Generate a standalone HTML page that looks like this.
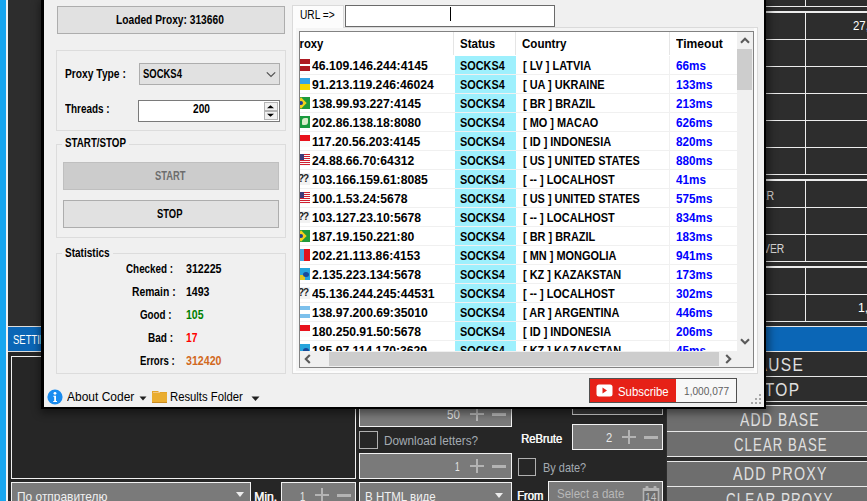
<!DOCTYPE html>
<html><head><meta charset="utf-8">
<style>
*{margin:0;padding:0;box-sizing:border-box}
html,body{width:867px;height:501px;overflow:hidden;background:#2d2d2d;font-family:"Liberation Sans",sans-serif;position:relative}
.a{position:absolute}
.t{white-space:nowrap;transform-origin:0 0}
</style></head><body>
<div class="a" style="left:0px;top:0px;width:6px;height:501px;background:#17a6f0;"></div>
<div class="a" style="left:6px;top:0px;width:2px;height:501px;background:#f2f2f2;"></div>
<div class="a" style="left:8px;top:0px;width:859px;height:501px;background:#2d2d2d;"></div>
<div class="a" style="left:8px;top:352px;width:658px;height:149px;background:#262626;"></div>
<div class="a" style="left:8px;top:326px;width:40px;height:1px;background:#dcdcdc;"></div>
<div class="a" style="left:8px;top:327px;width:40px;height:24px;background:#0b66b6;"></div>
<div class="a" style="left:8px;top:351px;width:40px;height:1px;background:#dcdcdc;"></div>
<div class="a t" style="left:12.50px;top:334px;font-size:12px;line-height:12px;color:#fff;transform:scaleX(0.7900);">SETTINGS</div>
<div class="a" style="left:11px;top:356px;width:345px;height:123px;background:#262626;border:1px solid #f0f0f0;"></div>
<div class="a" style="left:11px;top:482px;width:240px;height:38px;background:#7a7a7a;border:1px solid #f2f2f2;"></div>
<div class="a t" style="left:17.40px;top:489.5px;font-size:13px;line-height:13px;color:#f0f0f0;transform:scaleX(0.9169);">По отправителю</div>
<div class="a" style="left:236px;top:492px;width:0;height:0;border-left:4px solid transparent;border-right:4px solid transparent;border-top:5px solid #ececec"></div>
<div class="a t" style="left:253.70px;top:490px;font-size:13px;line-height:13px;color:#f8f8f8;transform:scaleX(0.9350);text-shadow:0.5px 0 0 #f8f8f8;">Min.</div>
<div class="a" style="left:281px;top:482px;width:75px;height:38px;background:#7a7a7a;border:1px solid #f2f2f2;"></div>
<div class="a t" style="left:299.60px;top:490px;font-size:13px;line-height:13px;color:#e8e8e8;transform:scaleX(0.7222);">1</div>
<div class="a" style="left:315px;top:494px;width:14px;height:2px;background:#b4b4b4;"></div><div class="a" style="left:321px;top:488px;width:2px;height:14px;background:#b4b4b4;"></div><div class="a" style="left:337px;top:494px;width:14px;height:3px;background:#b4b4b4;"></div>
<div class="a" style="left:359px;top:395px;width:153px;height:32px;background:#7a7a7a;border:1px solid #f2f2f2;"></div>
<div class="a t" style="left:447.30px;top:408px;font-size:13px;line-height:13px;color:#e8e8e8;transform:scaleX(0.8897);">50</div>
<div class="a" style="left:470px;top:413px;width:14px;height:2px;background:#b4b4b4;"></div><div class="a" style="left:476px;top:407px;width:2px;height:14px;background:#b4b4b4;"></div><div class="a" style="left:492px;top:413px;width:14px;height:3px;background:#b4b4b4;"></div>
<div class="a" style="left:359px;top:431px;width:19px;height:18px;background:#262626;border:1px solid #b0b0b0;"></div>
<div class="a t" style="left:383.60px;top:434px;font-size:13px;line-height:13px;color:#a4abb2;transform:scaleX(0.9039);">Download letters?</div>
<div class="a" style="left:359px;top:453px;width:153px;height:26px;background:#7a7a7a;border:1px solid #f2f2f2;"></div>
<div class="a t" style="left:454.60px;top:460px;font-size:13px;line-height:13px;color:#e8e8e8;transform:scaleX(0.6389);">1</div>
<div class="a" style="left:470px;top:465px;width:14px;height:2px;background:#b4b4b4;"></div><div class="a" style="left:476px;top:459px;width:2px;height:14px;background:#b4b4b4;"></div><div class="a" style="left:492px;top:465px;width:14px;height:3px;background:#b4b4b4;"></div>
<div class="a" style="left:359px;top:482px;width:153px;height:38px;background:#7a7a7a;border:1px solid #f2f2f2;"></div>
<div class="a t" style="left:365.10px;top:489.7px;font-size:13px;line-height:13px;color:#f0f0f0;transform:scaleX(0.8860);">В HTML виде</div>
<div class="a" style="left:495px;top:493px;width:0;height:0;border-left:4px solid transparent;border-right:4px solid transparent;border-top:5px solid #ececec"></div>
<div class="a" style="left:572px;top:390px;width:91px;height:25px;background:#383838;border:1px solid #c8c8c8;"></div>
<div class="a t" style="left:520.70px;top:432px;font-size:13px;line-height:13px;color:#f8f8f8;transform:scaleX(0.8595);text-shadow:0.5px 0 0 #f8f8f8;">ReBrute</div>
<div class="a" style="left:572px;top:424px;width:91px;height:26px;background:#7a7a7a;border:1px solid #f2f2f2;"></div>
<div class="a t" style="left:605.60px;top:431.4px;font-size:13px;line-height:13px;color:#e8e8e8;transform:scaleX(0.8611);">2</div>
<div class="a" style="left:622px;top:436px;width:14px;height:2px;background:#b4b4b4;"></div><div class="a" style="left:628px;top:430px;width:2px;height:14px;background:#b4b4b4;"></div><div class="a" style="left:644px;top:436px;width:14px;height:3px;background:#b4b4b4;"></div>
<div class="a" style="left:518px;top:458px;width:18px;height:18px;background:#262626;border:1px solid #b0b0b0;"></div>
<div class="a t" style="left:542.80px;top:461px;font-size:13px;line-height:13px;color:#a4abb2;transform:scaleX(0.8421);">By date?</div>
<div class="a t" style="left:517.00px;top:489.3px;font-size:13px;line-height:13px;color:#f8f8f8;transform:scaleX(0.8647);text-shadow:0.5px 0 0 #f8f8f8;">From</div>
<div class="a" style="left:548px;top:481px;width:115px;height:39px;background:#7a7a7a;border:1px solid #f2f2f2;"></div>
<div class="a t" style="left:557.00px;top:487.3px;font-size:13px;line-height:13px;color:#b8b8b8;transform:scaleX(0.8880);">Select a date</div>
<svg class="a" style="left:642px;top:485px" width="18" height="16"><rect x="1.5" y="4" width="15" height="14" fill="#6c6c6c" stroke="#b4b4b4" stroke-width="1.6"/><rect x="1" y="3" width="16" height="3" fill="#b4b4b4"/><rect x="3.5" y="1" width="3" height="3.5" rx="1" fill="#b4b4b4"/><rect x="11.5" y="1" width="3" height="3.5" rx="1" fill="#b4b4b4"/><text x="3.3" y="15.6" font-family="Liberation Sans" font-size="10" fill="#c4c4c4">14</text></svg>
<div class="a" style="left:667px;top:326px;width:200px;height:1px;background:#e8e8e8;"></div>
<div class="a" style="left:667px;top:327px;width:200px;height:24px;background:#0b66b6;"></div>
<div class="a" style="left:667px;top:351px;width:200px;height:1px;background:#e8e8e8;"></div>
<div class="a t" style="left:746.45px;top:356px;font-size:18px;line-height:18px;color:#e0e0e0;transform:scaleX(0.8600);letter-spacing:1.6px;">PAUSE</div>
<div class="a" style="left:667px;top:376px;width:200px;height:1px;background:#e8e8e8;"></div>
<div class="a t" style="left:752.99px;top:381px;font-size:18px;line-height:18px;color:#e0e0e0;transform:scaleX(0.8600);letter-spacing:1.6px;">STOP</div>
<div class="a" style="left:667px;top:401px;width:200px;height:1px;background:#e8e8e8;"></div>
<div class="a" style="left:667px;top:405px;width:200px;height:1px;background:#e8e8e8;"></div>
<div class="a" style="left:667px;top:406px;width:200px;height:25px;background:#6e6e6e;"></div>
<div class="a t" style="left:739.80px;top:411px;font-size:18px;line-height:18px;color:#e0e0e0;transform:scaleX(0.7744);letter-spacing:1.5px;">ADD BASE</div>
<div class="a" style="left:667px;top:431px;width:200px;height:1px;background:#e8e8e8;"></div>
<div class="a" style="left:667px;top:432px;width:200px;height:24px;background:#6e6e6e;"></div>
<div class="a t" style="left:733.50px;top:436px;font-size:18px;line-height:18px;color:#e0e0e0;transform:scaleX(0.7312);letter-spacing:1.5px;">CLEAR BASE</div>
<div class="a" style="left:667px;top:456px;width:200px;height:1px;background:#e8e8e8;"></div>
<div class="a" style="left:667px;top:461px;width:200px;height:1px;background:#e8e8e8;"></div>
<div class="a" style="left:667px;top:462px;width:200px;height:24px;background:#6e6e6e;"></div>
<div class="a t" style="left:733.00px;top:465px;font-size:18px;line-height:18px;color:#e0e0e0;transform:scaleX(0.7915);letter-spacing:1.5px;">ADD PROXY</div>
<div class="a" style="left:667px;top:486px;width:200px;height:1px;background:#e8e8e8;"></div>
<div class="a" style="left:667px;top:487px;width:200px;height:14px;background:#6e6e6e;"></div>
<div class="a t" style="left:725.90px;top:490.5px;font-size:18px;line-height:18px;color:#e0e0e0;transform:scaleX(0.7434);letter-spacing:1.5px;">CLEAR PROXY</div>
<div class="a" style="left:764px;top:6px;width:103px;height:1px;background:#ececec;"></div>
<div class="a" style="left:764px;top:11px;width:103px;height:2px;background:#ececec;"></div>
<div class="a" style="left:764px;top:39px;width:103px;height:1px;background:#ececec;"></div>
<div class="a" style="left:764px;top:66px;width:103px;height:1px;background:#ececec;"></div>
<div class="a" style="left:764px;top:93px;width:103px;height:1px;background:#ececec;"></div>
<div class="a" style="left:764px;top:120px;width:103px;height:1px;background:#ececec;"></div>
<div class="a" style="left:764px;top:147px;width:103px;height:1px;background:#ececec;"></div>
<div class="a" style="left:764px;top:174px;width:103px;height:1px;background:#ececec;"></div>
<div class="a" style="left:764px;top:179px;width:103px;height:2px;background:#ececec;"></div>
<div class="a" style="left:764px;top:207px;width:103px;height:1px;background:#ececec;"></div>
<div class="a" style="left:764px;top:234px;width:103px;height:1px;background:#ececec;"></div>
<div class="a" style="left:764px;top:261px;width:103px;height:1px;background:#ececec;"></div>
<div class="a" style="left:764px;top:266px;width:103px;height:2px;background:#ececec;"></div>
<div class="a" style="left:764px;top:294px;width:103px;height:1px;background:#ececec;"></div>
<div class="a" style="left:764px;top:321px;width:103px;height:1px;background:#ececec;"></div>
<div class="a" style="left:805px;top:0px;width:1px;height:6px;background:#ececec;"></div>
<div class="a" style="left:805px;top:13px;width:1px;height:161px;background:#ececec;"></div>
<div class="a" style="left:805px;top:181px;width:1px;height:80px;background:#ececec;"></div>
<div class="a" style="left:805px;top:268px;width:1px;height:53px;background:#ececec;"></div>
<div class="a t" style="left:853.40px;top:19px;font-size:13px;line-height:13px;color:#fff;transform:scaleX(0.8800);">27,5</div>
<div class="a t" style="left:730.79px;top:190px;font-size:12px;line-height:12px;color:#d8d8d8;transform:scaleX(0.8800);">SERVER</div>
<div class="a t" style="left:741.77px;top:243px;font-size:12px;line-height:12px;color:#d8d8d8;transform:scaleX(0.8600);">SERVER</div>
<div class="a t" style="left:858.30px;top:301px;font-size:13px;line-height:13px;color:#fff;transform:scaleX(0.9500);">1,</div>
<div class="a" style="left:41px;top:0px;width:725px;height:409px;background:#000;box-shadow:1px 2px 8px 2px rgba(0,0,0,0.45);"></div>
<div class="a" style="left:44px;top:0px;width:720px;height:407px;background:#f0f0f0;"></div>
<div class="a" style="left:57px;top:6px;width:228px;height:28px;background:#e1e1e1;border:1px solid #adadad;"></div>
<div class="a t" style="left:116.20px;top:14px;font-size:12px;line-height:12px;font-weight:bold;color:#000;transform:scaleX(0.8508);">Loaded Proxy: 313660</div>
<div class="a" style="left:56px;top:50px;width:230px;height:81px;border:1px solid #dcdcdc;"></div>
<div class="a t" style="left:65.20px;top:68px;font-size:12px;line-height:12px;font-weight:bold;color:#000;transform:scaleX(0.8551);">Proxy Type :</div>
<div class="a" style="left:139px;top:63px;width:141px;height:22px;background:#e1e1e1;border:1px solid #adadad;"></div>
<div class="a t" style="left:143.00px;top:68px;font-size:12px;line-height:12px;font-weight:bold;color:#000;transform:scaleX(0.7895);">SOCKS4</div>
<svg class="a" style="left:266px;top:71px" width="10" height="7"><path d="M0.8 1.3 L5 5.5 L9.2 1.3" fill="none" stroke="#505050" stroke-width="1.2"/></svg>
<div class="a t" style="left:65.20px;top:103px;font-size:12px;line-height:12px;font-weight:bold;color:#000;transform:scaleX(0.8259);">Threads :</div>
<div class="a" style="left:138px;top:100px;width:142px;height:22px;background:#fff;border:1px solid #7a7a7a;"></div>
<div class="a t" style="left:192.50px;top:103px;font-size:12px;line-height:12px;font-weight:bold;color:#000;transform:scaleX(0.8450);">200</div>
<div class="a" style="left:264px;top:102px;width:14px;height:9px;background:#f0f0f0;border:1px solid #b4b4b4;"></div>
<div class="a" style="left:264px;top:111px;width:14px;height:9px;background:#f0f0f0;border:1px solid #b4b4b4;"></div>
<svg class="a" style="left:267px;top:104px" width="8" height="15"><path d="M3.5 1.3 L7 4.3 L0 4.3Z M0 9.8 L7 9.8 L3.5 12.8Z" fill="#000"/></svg>
<div class="a" style="left:56px;top:144px;width:230px;height:94px;border:1px solid #dcdcdc;"></div>
<div class="a" style="left:62px;top:138px;width:67px;height:12px;background:#f0f0f0;"></div>
<div class="a t" style="left:64.80px;top:137px;font-size:12px;line-height:12px;font-weight:bold;color:#000;transform:scaleX(0.8144);">START/STOP</div>
<div class="a" style="left:63px;top:162px;width:216px;height:28px;background:#cccccc;border:1px solid #bfbfbf;"></div>
<div class="a t" style="left:155.00px;top:170px;font-size:12px;line-height:12px;font-weight:bold;color:#6d6d6d;transform:scaleX(0.7826);">START</div>
<div class="a" style="left:63px;top:200px;width:216px;height:28px;background:#e1e1e1;border:1px solid #adadad;"></div>
<div class="a t" style="left:157.10px;top:208px;font-size:12px;line-height:12px;font-weight:bold;color:#000;transform:scaleX(0.7846);">STOP</div>
<div class="a" style="left:56px;top:253px;width:230px;height:121px;border:1px solid #dcdcdc;"></div>
<div class="a" style="left:62px;top:247px;width:51px;height:12px;background:#f0f0f0;"></div>
<div class="a t" style="left:65.20px;top:247px;font-size:12px;line-height:12px;font-weight:bold;color:#000;transform:scaleX(0.8352);">Statistics</div>
<div class="a t" style="left:126.00px;top:263px;font-size:12px;line-height:12px;font-weight:bold;color:#000;transform:scaleX(0.8206);">Checked :</div>
<div class="a t" style="left:186.00px;top:263px;font-size:12px;line-height:12px;font-weight:bold;color:#000;transform:scaleX(0.8875);">312225</div>
<div class="a t" style="left:132.20px;top:286px;font-size:12px;line-height:12px;font-weight:bold;color:#000;transform:scaleX(0.8600);">Remain :</div>
<div class="a t" style="left:186.00px;top:286px;font-size:12px;line-height:12px;font-weight:bold;color:#000;transform:scaleX(0.8801);">1493</div>
<div class="a t" style="left:139.50px;top:309px;font-size:12px;line-height:12px;font-weight:bold;color:#000;transform:scaleX(0.8140);">Good :</div>
<div class="a t" style="left:186.00px;top:309px;font-size:12px;line-height:12px;font-weight:bold;color:#008000;transform:scaleX(0.8750);">105</div>
<div class="a t" style="left:148.20px;top:332px;font-size:12px;line-height:12px;font-weight:bold;color:#000;transform:scaleX(0.8333);">Bad :</div>
<div class="a t" style="left:186.00px;top:332px;font-size:12px;line-height:12px;font-weight:bold;color:#ff0000;transform:scaleX(0.8571);">17</div>
<div class="a t" style="left:139.50px;top:355px;font-size:12px;line-height:12px;font-weight:bold;color:#000;transform:scaleX(0.7995);">Errors :</div>
<div class="a t" style="left:186.00px;top:355px;font-size:12px;line-height:12px;font-weight:bold;color:#d2691e;transform:scaleX(0.8875);">312420</div>
<svg class="a" style="left:47px;top:389px" width="16" height="16"><circle cx="8" cy="8" r="7.6" fill="#1a8cf0"/><circle cx="8" cy="4.3" r="1.4" fill="#fff"/><path d="M6.3 6.8 H9 V12 H10 V13 H6.2 V12 H7.2 V7.8 H6.3Z" fill="#fff"/></svg>
<div class="a t" style="left:66.80px;top:390px;font-size:13px;line-height:13px;color:#000;transform:scaleX(0.9219);">About Coder</div>
<svg class="a" style="left:139px;top:396px" width="8" height="5"><path d="M0.5 0.5 H7.5 L4 4.5Z" fill="#202020"/></svg>
<svg class="a" style="left:152px;top:391px" width="15" height="12"><path d="M0 0 H6 L7 1 H15 V12 H0Z" fill="#e4a42a"/><rect x="0" y="2" width="15" height="10" fill="#eaad30"/><path d="M1 1.5 H8" stroke="#f3c880" stroke-width="1"/><path d="M0 11.5 H15" stroke="#c88a20" stroke-width="1"/></svg>
<div class="a t" style="left:170.40px;top:390px;font-size:13px;line-height:13px;color:#000;transform:scaleX(0.8687);">Results Folder</div>
<svg class="a" style="left:251px;top:396px" width="9" height="6"><path d="M0.5 0.5 H8.5 L4.5 5Z" fill="#202020"/></svg>
<div class="a" style="left:292px;top:27px;width:466px;height:347px;background:#fcfcfc;border:1px solid #dadada;"></div>
<div class="a" style="left:292px;top:5px;width:52px;height:23px;background:#fcfcfc;border:1px solid #dadada;border-bottom:none;"></div>
<div class="a t" style="left:300.30px;top:9px;font-size:12px;line-height:12px;color:#000;transform:scaleX(0.8484);">URL =&gt;</div>
<div class="a" style="left:345px;top:5px;width:210px;height:22px;background:#fff;border:1px solid #6a6a6a;"></div>
<div class="a" style="left:450px;top:7px;width:1px;height:14px;background:#000;"></div>
<div class="a" style="left:296px;top:28px;width:458px;height:343px;background:#f4f4f4;"></div>
<div class="a" style="left:299px;top:31px;width:455px;height:337px;border:1px solid #828282;background:#fff"></div>
<div class="a" style="left:300px;top:32px;width:437px;height:319px;overflow:hidden">
<div class="a t" style="left:-7.54px;top:5px;font-size:13px;line-height:13px;font-weight:bold;color:#000;transform:scaleX(0.8691);">Proxy</div>
<div class="a t" style="left:160.00px;top:5px;font-size:13px;line-height:13px;font-weight:bold;color:#000;transform:scaleX(0.8866);">Status</div>
<div class="a t" style="left:222.00px;top:5px;font-size:13px;line-height:13px;font-weight:bold;color:#000;transform:scaleX(0.8916);">Country</div>
<div class="a t" style="left:375.80px;top:5px;font-size:13px;line-height:13px;font-weight:bold;color:#000;transform:scaleX(0.9304);">Timeout</div>
<div class="a" style="left:153px;top:0px;width:1px;height:23px;background:#e5e5e5;"></div>
<div class="a" style="left:215px;top:0px;width:1px;height:23px;background:#e5e5e5;"></div>
<div class="a" style="left:369px;top:0px;width:1px;height:23px;background:#e5e5e5;"></div>
<div class="a" style="left:0;top:27px;width:10px;height:12px;background:linear-gradient(#ad1a22 0,#ad1a22 5px,#fff 5px,#fff 7px,#ad1a22 7px);overflow:hidden"></div>
<div class="a" style="left:155px;top:24px;width:61px;height:18px;background:#9ef0fd;"></div>
<div class="a" style="left:0px;top:42px;width:437px;height:1px;background:#f0f0f0;"></div>
<div class="a" style="left:369px;top:24px;width:1px;height:18px;background:#f0f0f0;"></div>
<div class="a t" style="left:12.00px;top:27px;font-size:13px;line-height:13px;font-weight:bold;color:#000;transform:scaleX(0.9361);">46.109.146.244:4145</div>
<div class="a t" style="left:160.00px;top:27px;font-size:13px;line-height:13px;font-weight:bold;color:#000;transform:scaleX(0.8355);">SOCKS4</div>
<div class="a t" style="left:223.00px;top:27px;font-size:13px;line-height:13px;font-weight:bold;color:#000;transform:scaleX(0.8409);">[ LV ] LATVIA</div>
<div class="a t" style="left:376.00px;top:27px;font-size:13px;line-height:13px;font-weight:bold;color:#0000ff;transform:scaleX(0.9006);">66ms</div>
<div class="a" style="left:0;top:46px;width:10px;height:12px;background:linear-gradient(#35a4e6 0,#35a4e6 6px,#f4d700 6px);overflow:hidden"></div>
<div class="a" style="left:155px;top:43px;width:61px;height:18px;background:#9ef0fd;"></div>
<div class="a" style="left:0px;top:61px;width:437px;height:1px;background:#f0f0f0;"></div>
<div class="a" style="left:369px;top:43px;width:1px;height:18px;background:#f0f0f0;"></div>
<div class="a t" style="left:12.00px;top:46px;font-size:13px;line-height:13px;font-weight:bold;color:#000;transform:scaleX(0.9361);">91.213.119.246:46024</div>
<div class="a t" style="left:160.00px;top:46px;font-size:13px;line-height:13px;font-weight:bold;color:#000;transform:scaleX(0.8355);">SOCKS4</div>
<div class="a t" style="left:223.00px;top:46px;font-size:13px;line-height:13px;font-weight:bold;color:#000;transform:scaleX(0.8409);">[ UA ] UKRAINE</div>
<div class="a t" style="left:376.00px;top:46px;font-size:13px;line-height:13px;font-weight:bold;color:#0000ff;transform:scaleX(0.9006);">133ms</div>
<div class="a" style="left:0;top:65px;width:10px;height:12px;background:#1e9a3a;overflow:hidden"><div class="a" style="left:-3px;top:2px;width:8px;height:8px;background:#f3d21b;transform:rotate(45deg)"></div><div class="a" style="left:-1px;top:4px;width:4px;height:4px;border-radius:50%;background:#203f90"></div></div>
<div class="a" style="left:155px;top:62px;width:61px;height:18px;background:#9ef0fd;"></div>
<div class="a" style="left:0px;top:80px;width:437px;height:1px;background:#f0f0f0;"></div>
<div class="a" style="left:369px;top:62px;width:1px;height:18px;background:#f0f0f0;"></div>
<div class="a t" style="left:12.00px;top:65px;font-size:13px;line-height:13px;font-weight:bold;color:#000;transform:scaleX(0.9361);">138.99.93.227:4145</div>
<div class="a t" style="left:160.00px;top:65px;font-size:13px;line-height:13px;font-weight:bold;color:#000;transform:scaleX(0.8355);">SOCKS4</div>
<div class="a t" style="left:223.00px;top:65px;font-size:13px;line-height:13px;font-weight:bold;color:#000;transform:scaleX(0.8409);">[ BR ] BRAZIL</div>
<div class="a t" style="left:376.00px;top:65px;font-size:13px;line-height:13px;font-weight:bold;color:#0000ff;transform:scaleX(0.9006);">213ms</div>
<div class="a" style="left:0;top:84px;width:10px;height:12px;background:#1a9a3e;overflow:hidden"><div class="a" style="left:2px;top:2px;width:6px;height:7px;background:#d8ecc8;border-radius:3px 1px 3px 1px"></div></div>
<div class="a" style="left:155px;top:81px;width:61px;height:18px;background:#9ef0fd;"></div>
<div class="a" style="left:0px;top:99px;width:437px;height:1px;background:#f0f0f0;"></div>
<div class="a" style="left:369px;top:81px;width:1px;height:18px;background:#f0f0f0;"></div>
<div class="a t" style="left:12.00px;top:84px;font-size:13px;line-height:13px;font-weight:bold;color:#000;transform:scaleX(0.9361);">202.86.138.18:8080</div>
<div class="a t" style="left:160.00px;top:84px;font-size:13px;line-height:13px;font-weight:bold;color:#000;transform:scaleX(0.8355);">SOCKS4</div>
<div class="a t" style="left:223.00px;top:84px;font-size:13px;line-height:13px;font-weight:bold;color:#000;transform:scaleX(0.8409);">[ MO ] MACAO</div>
<div class="a t" style="left:376.00px;top:84px;font-size:13px;line-height:13px;font-weight:bold;color:#0000ff;transform:scaleX(0.9006);">626ms</div>
<div class="a" style="left:0;top:103px;width:10px;height:12px;background:linear-gradient(#e8121c 0,#e8121c 6px,#fbfbfb 6px);overflow:hidden"></div>
<div class="a" style="left:155px;top:100px;width:61px;height:18px;background:#9ef0fd;"></div>
<div class="a" style="left:0px;top:118px;width:437px;height:1px;background:#f0f0f0;"></div>
<div class="a" style="left:369px;top:100px;width:1px;height:18px;background:#f0f0f0;"></div>
<div class="a t" style="left:12.00px;top:103px;font-size:13px;line-height:13px;font-weight:bold;color:#000;transform:scaleX(0.9361);">117.20.56.203:4145</div>
<div class="a t" style="left:160.00px;top:103px;font-size:13px;line-height:13px;font-weight:bold;color:#000;transform:scaleX(0.8355);">SOCKS4</div>
<div class="a t" style="left:223.00px;top:103px;font-size:13px;line-height:13px;font-weight:bold;color:#000;transform:scaleX(0.8409);">[ ID ] INDONESIA</div>
<div class="a t" style="left:376.00px;top:103px;font-size:13px;line-height:13px;font-weight:bold;color:#0000ff;transform:scaleX(0.9006);">820ms</div>
<div class="a" style="left:0;top:122px;width:10px;height:12px;background:repeating-linear-gradient(#d02030 0,#d02030 1px,#fafafa 1px,#fafafa 2px);overflow:hidden"><div class="a" style="left:0;top:0;width:4px;height:6px;background:#3c3b7a"></div></div>
<div class="a" style="left:155px;top:119px;width:61px;height:18px;background:#9ef0fd;"></div>
<div class="a" style="left:0px;top:137px;width:437px;height:1px;background:#f0f0f0;"></div>
<div class="a" style="left:369px;top:119px;width:1px;height:18px;background:#f0f0f0;"></div>
<div class="a t" style="left:12.00px;top:122px;font-size:13px;line-height:13px;font-weight:bold;color:#000;transform:scaleX(0.9361);">24.88.66.70:64312</div>
<div class="a t" style="left:160.00px;top:122px;font-size:13px;line-height:13px;font-weight:bold;color:#000;transform:scaleX(0.8355);">SOCKS4</div>
<div class="a t" style="left:223.00px;top:122px;font-size:13px;line-height:13px;font-weight:bold;color:#000;transform:scaleX(0.8409);">[ US ] UNITED STATES</div>
<div class="a t" style="left:376.00px;top:122px;font-size:13px;line-height:13px;font-weight:bold;color:#0000ff;transform:scaleX(0.9006);">880ms</div>
<div class="a" style="left:0;top:141px;width:10px;height:12px;background:#f2f2f2;overflow:hidden"><div class="a t" style="left:-2px;top:1px;font-size:10px;line-height:10px;font-weight:bold;color:#222;letter-spacing:-1px">??</div></div>
<div class="a" style="left:155px;top:138px;width:61px;height:18px;background:#9ef0fd;"></div>
<div class="a" style="left:0px;top:156px;width:437px;height:1px;background:#f0f0f0;"></div>
<div class="a" style="left:369px;top:138px;width:1px;height:18px;background:#f0f0f0;"></div>
<div class="a t" style="left:12.00px;top:141px;font-size:13px;line-height:13px;font-weight:bold;color:#000;transform:scaleX(0.9361);">103.166.159.61:8085</div>
<div class="a t" style="left:160.00px;top:141px;font-size:13px;line-height:13px;font-weight:bold;color:#000;transform:scaleX(0.8355);">SOCKS4</div>
<div class="a t" style="left:223.00px;top:141px;font-size:13px;line-height:13px;font-weight:bold;color:#000;transform:scaleX(0.8409);">[ -- ] LOCALHOST</div>
<div class="a t" style="left:376.00px;top:141px;font-size:13px;line-height:13px;font-weight:bold;color:#0000ff;transform:scaleX(0.9006);">41ms</div>
<div class="a" style="left:0;top:160px;width:10px;height:12px;background:repeating-linear-gradient(#d02030 0,#d02030 1px,#fafafa 1px,#fafafa 2px);overflow:hidden"><div class="a" style="left:0;top:0;width:4px;height:6px;background:#3c3b7a"></div></div>
<div class="a" style="left:155px;top:157px;width:61px;height:18px;background:#9ef0fd;"></div>
<div class="a" style="left:0px;top:175px;width:437px;height:1px;background:#f0f0f0;"></div>
<div class="a" style="left:369px;top:157px;width:1px;height:18px;background:#f0f0f0;"></div>
<div class="a t" style="left:12.00px;top:160px;font-size:13px;line-height:13px;font-weight:bold;color:#000;transform:scaleX(0.9361);">100.1.53.24:5678</div>
<div class="a t" style="left:160.00px;top:160px;font-size:13px;line-height:13px;font-weight:bold;color:#000;transform:scaleX(0.8355);">SOCKS4</div>
<div class="a t" style="left:223.00px;top:160px;font-size:13px;line-height:13px;font-weight:bold;color:#000;transform:scaleX(0.8409);">[ US ] UNITED STATES</div>
<div class="a t" style="left:376.00px;top:160px;font-size:13px;line-height:13px;font-weight:bold;color:#0000ff;transform:scaleX(0.9006);">575ms</div>
<div class="a" style="left:0;top:179px;width:10px;height:12px;background:#f2f2f2;overflow:hidden"><div class="a t" style="left:-2px;top:1px;font-size:10px;line-height:10px;font-weight:bold;color:#222;letter-spacing:-1px">??</div></div>
<div class="a" style="left:155px;top:176px;width:61px;height:18px;background:#9ef0fd;"></div>
<div class="a" style="left:0px;top:194px;width:437px;height:1px;background:#f0f0f0;"></div>
<div class="a" style="left:369px;top:176px;width:1px;height:18px;background:#f0f0f0;"></div>
<div class="a t" style="left:12.00px;top:179px;font-size:13px;line-height:13px;font-weight:bold;color:#000;transform:scaleX(0.9361);">103.127.23.10:5678</div>
<div class="a t" style="left:160.00px;top:179px;font-size:13px;line-height:13px;font-weight:bold;color:#000;transform:scaleX(0.8355);">SOCKS4</div>
<div class="a t" style="left:223.00px;top:179px;font-size:13px;line-height:13px;font-weight:bold;color:#000;transform:scaleX(0.8409);">[ -- ] LOCALHOST</div>
<div class="a t" style="left:376.00px;top:179px;font-size:13px;line-height:13px;font-weight:bold;color:#0000ff;transform:scaleX(0.9006);">834ms</div>
<div class="a" style="left:0;top:198px;width:10px;height:12px;background:#1e9a3a;overflow:hidden"><div class="a" style="left:-3px;top:2px;width:8px;height:8px;background:#f3d21b;transform:rotate(45deg)"></div><div class="a" style="left:-1px;top:4px;width:4px;height:4px;border-radius:50%;background:#203f90"></div></div>
<div class="a" style="left:155px;top:195px;width:61px;height:18px;background:#9ef0fd;"></div>
<div class="a" style="left:0px;top:213px;width:437px;height:1px;background:#f0f0f0;"></div>
<div class="a" style="left:369px;top:195px;width:1px;height:18px;background:#f0f0f0;"></div>
<div class="a t" style="left:12.00px;top:198px;font-size:13px;line-height:13px;font-weight:bold;color:#000;transform:scaleX(0.9361);">187.19.150.221:80</div>
<div class="a t" style="left:160.00px;top:198px;font-size:13px;line-height:13px;font-weight:bold;color:#000;transform:scaleX(0.8355);">SOCKS4</div>
<div class="a t" style="left:223.00px;top:198px;font-size:13px;line-height:13px;font-weight:bold;color:#000;transform:scaleX(0.8409);">[ BR ] BRAZIL</div>
<div class="a t" style="left:376.00px;top:198px;font-size:13px;line-height:13px;font-weight:bold;color:#0000ff;transform:scaleX(0.9006);">183ms</div>
<div class="a" style="left:0;top:217px;width:10px;height:12px;background:linear-gradient(90deg,#4aa8e0 0,#4aa8e0 4px,#e0141c 4px);overflow:hidden"></div>
<div class="a" style="left:155px;top:214px;width:61px;height:18px;background:#9ef0fd;"></div>
<div class="a" style="left:0px;top:232px;width:437px;height:1px;background:#f0f0f0;"></div>
<div class="a" style="left:369px;top:214px;width:1px;height:18px;background:#f0f0f0;"></div>
<div class="a t" style="left:12.00px;top:217px;font-size:13px;line-height:13px;font-weight:bold;color:#000;transform:scaleX(0.9361);">202.21.113.86:4153</div>
<div class="a t" style="left:160.00px;top:217px;font-size:13px;line-height:13px;font-weight:bold;color:#000;transform:scaleX(0.8355);">SOCKS4</div>
<div class="a t" style="left:223.00px;top:217px;font-size:13px;line-height:13px;font-weight:bold;color:#000;transform:scaleX(0.8409);">[ MN ] MONGOLIA</div>
<div class="a t" style="left:376.00px;top:217px;font-size:13px;line-height:13px;font-weight:bold;color:#0000ff;transform:scaleX(0.9006);">941ms</div>
<div class="a" style="left:0;top:236px;width:10px;height:12px;background:#26a4dc;overflow:hidden"><div class="a" style="left:0;top:7px;width:5px;height:5px;background:#e0c820"></div><div class="a" style="left:3px;top:4px;width:6px;height:5px;border-radius:50%;background:#1a4a9a"></div></div>
<div class="a" style="left:155px;top:233px;width:61px;height:18px;background:#9ef0fd;"></div>
<div class="a" style="left:0px;top:251px;width:437px;height:1px;background:#f0f0f0;"></div>
<div class="a" style="left:369px;top:233px;width:1px;height:18px;background:#f0f0f0;"></div>
<div class="a t" style="left:12.00px;top:236px;font-size:13px;line-height:13px;font-weight:bold;color:#000;transform:scaleX(0.9361);">2.135.223.134:5678</div>
<div class="a t" style="left:160.00px;top:236px;font-size:13px;line-height:13px;font-weight:bold;color:#000;transform:scaleX(0.8355);">SOCKS4</div>
<div class="a t" style="left:223.00px;top:236px;font-size:13px;line-height:13px;font-weight:bold;color:#000;transform:scaleX(0.8409);">[ KZ ] KAZAKSTAN</div>
<div class="a t" style="left:376.00px;top:236px;font-size:13px;line-height:13px;font-weight:bold;color:#0000ff;transform:scaleX(0.9006);">173ms</div>
<div class="a" style="left:0;top:255px;width:10px;height:12px;background:#f2f2f2;overflow:hidden"><div class="a t" style="left:-2px;top:1px;font-size:10px;line-height:10px;font-weight:bold;color:#222;letter-spacing:-1px">??</div></div>
<div class="a" style="left:155px;top:252px;width:61px;height:18px;background:#9ef0fd;"></div>
<div class="a" style="left:0px;top:270px;width:437px;height:1px;background:#f0f0f0;"></div>
<div class="a" style="left:369px;top:252px;width:1px;height:18px;background:#f0f0f0;"></div>
<div class="a t" style="left:12.00px;top:255px;font-size:13px;line-height:13px;font-weight:bold;color:#000;transform:scaleX(0.9361);">45.136.244.245:44531</div>
<div class="a t" style="left:160.00px;top:255px;font-size:13px;line-height:13px;font-weight:bold;color:#000;transform:scaleX(0.8355);">SOCKS4</div>
<div class="a t" style="left:223.00px;top:255px;font-size:13px;line-height:13px;font-weight:bold;color:#000;transform:scaleX(0.8409);">[ -- ] LOCALHOST</div>
<div class="a t" style="left:376.00px;top:255px;font-size:13px;line-height:13px;font-weight:bold;color:#0000ff;transform:scaleX(0.9006);">302ms</div>
<div class="a" style="left:0;top:274px;width:10px;height:12px;background:linear-gradient(#7cc0ec 0,#7cc0ec 4px,#fff 4px,#fff 8px,#7cc0ec 8px);overflow:hidden"></div>
<div class="a" style="left:155px;top:271px;width:61px;height:18px;background:#9ef0fd;"></div>
<div class="a" style="left:0px;top:289px;width:437px;height:1px;background:#f0f0f0;"></div>
<div class="a" style="left:369px;top:271px;width:1px;height:18px;background:#f0f0f0;"></div>
<div class="a t" style="left:12.00px;top:274px;font-size:13px;line-height:13px;font-weight:bold;color:#000;transform:scaleX(0.9361);">138.97.200.69:35010</div>
<div class="a t" style="left:160.00px;top:274px;font-size:13px;line-height:13px;font-weight:bold;color:#000;transform:scaleX(0.8355);">SOCKS4</div>
<div class="a t" style="left:223.00px;top:274px;font-size:13px;line-height:13px;font-weight:bold;color:#000;transform:scaleX(0.8409);">[ AR ] ARGENTINA</div>
<div class="a t" style="left:376.00px;top:274px;font-size:13px;line-height:13px;font-weight:bold;color:#0000ff;transform:scaleX(0.9006);">446ms</div>
<div class="a" style="left:0;top:293px;width:10px;height:12px;background:linear-gradient(#e8121c 0,#e8121c 6px,#fbfbfb 6px);overflow:hidden"></div>
<div class="a" style="left:155px;top:290px;width:61px;height:18px;background:#9ef0fd;"></div>
<div class="a" style="left:0px;top:308px;width:437px;height:1px;background:#f0f0f0;"></div>
<div class="a" style="left:369px;top:290px;width:1px;height:18px;background:#f0f0f0;"></div>
<div class="a t" style="left:12.00px;top:293px;font-size:13px;line-height:13px;font-weight:bold;color:#000;transform:scaleX(0.9361);">180.250.91.50:5678</div>
<div class="a t" style="left:160.00px;top:293px;font-size:13px;line-height:13px;font-weight:bold;color:#000;transform:scaleX(0.8355);">SOCKS4</div>
<div class="a t" style="left:223.00px;top:293px;font-size:13px;line-height:13px;font-weight:bold;color:#000;transform:scaleX(0.8409);">[ ID ] INDONESIA</div>
<div class="a t" style="left:376.00px;top:293px;font-size:13px;line-height:13px;font-weight:bold;color:#0000ff;transform:scaleX(0.9006);">206ms</div>
<div class="a" style="left:0;top:312px;width:10px;height:12px;background:#26a4dc;overflow:hidden"><div class="a" style="left:0;top:7px;width:5px;height:5px;background:#e0c820"></div><div class="a" style="left:3px;top:4px;width:6px;height:5px;border-radius:50%;background:#1a4a9a"></div></div>
<div class="a" style="left:155px;top:309px;width:61px;height:18px;background:#9ef0fd;"></div>
<div class="a" style="left:0px;top:327px;width:437px;height:1px;background:#f0f0f0;"></div>
<div class="a" style="left:369px;top:309px;width:1px;height:18px;background:#f0f0f0;"></div>
<div class="a t" style="left:12.00px;top:312px;font-size:13px;line-height:13px;font-weight:bold;color:#000;transform:scaleX(0.9361);">185.97.114.170:3629</div>
<div class="a t" style="left:160.00px;top:312px;font-size:13px;line-height:13px;font-weight:bold;color:#000;transform:scaleX(0.8355);">SOCKS4</div>
<div class="a t" style="left:223.00px;top:312px;font-size:13px;line-height:13px;font-weight:bold;color:#000;transform:scaleX(0.8409);">[ KZ ] KAZAKSTAN</div>
<div class="a t" style="left:376.00px;top:312px;font-size:13px;line-height:13px;font-weight:bold;color:#0000ff;transform:scaleX(0.9006);">45ms</div>
</div>
<div class="a" style="left:737px;top:32px;width:16px;height:319px;background:#f0f0f0;"></div>
<div class="a" style="left:737px;top:49px;width:15px;height:41px;background:#cdcdcd;"></div>
<svg class="a" style="left:740px;top:37px" width="10" height="7"><path d="M1 5.8 L5 1.8 L9 5.8" fill="none" stroke="#5a5a5a" stroke-width="2.1"/></svg>
<svg class="a" style="left:740px;top:338px" width="10" height="7"><path d="M1 1.2 L5 5.2 L9 1.2" fill="none" stroke="#5a5a5a" stroke-width="2.1"/></svg>
<div class="a" style="left:300px;top:351px;width:453px;height:16px;background:#f0f0f0;"></div>
<div class="a" style="left:329px;top:352px;width:390px;height:14px;background:#cdcdcd;"></div>
<svg class="a" style="left:304px;top:354px" width="7" height="10"><path d="M5.8 1 L1.8 5 L5.8 9" fill="none" stroke="#5a5a5a" stroke-width="2.1"/></svg>
<svg class="a" style="left:725px;top:354px" width="7" height="10"><path d="M1.2 1 L5.2 5 L1.2 9" fill="none" stroke="#5a5a5a" stroke-width="2.1"/></svg>
<div class="a" style="left:589px;top:378px;width:148px;height:25px;background:#f8f8f8;border:1px solid #505050;"></div>
<div class="a" style="left:590px;top:379px;width:86px;height:23px;background:#e62117;"></div>
<svg class="a" style="left:596px;top:384px" width="17" height="13"><rect x="0.5" y="0.5" width="16" height="12" rx="2.5" fill="#fff"/><path d="M6.5 3.5 L11 6.5 L6.5 9.5Z" fill="#e62117"/></svg>
<div class="a t" style="left:618.40px;top:385px;font-size:13px;line-height:13px;color:#fff;transform:scaleX(0.8754);">Subscribe</div>
<div class="a t" style="left:684.00px;top:386px;font-size:11px;line-height:11px;color:#606060;transform:scaleX(0.9202);">1,000,077</div>
<div class="a" style="left:759px;top:394px;width:2px;height:2px;background:#a8a8a8;"></div>
<div class="a" style="left:755px;top:398px;width:2px;height:2px;background:#a8a8a8;"></div>
<div class="a" style="left:759px;top:398px;width:2px;height:2px;background:#a8a8a8;"></div>
<div class="a" style="left:751px;top:402px;width:2px;height:2px;background:#a8a8a8;"></div>
<div class="a" style="left:755px;top:402px;width:2px;height:2px;background:#a8a8a8;"></div>
<div class="a" style="left:759px;top:402px;width:2px;height:2px;background:#a8a8a8;"></div>
</body></html>
